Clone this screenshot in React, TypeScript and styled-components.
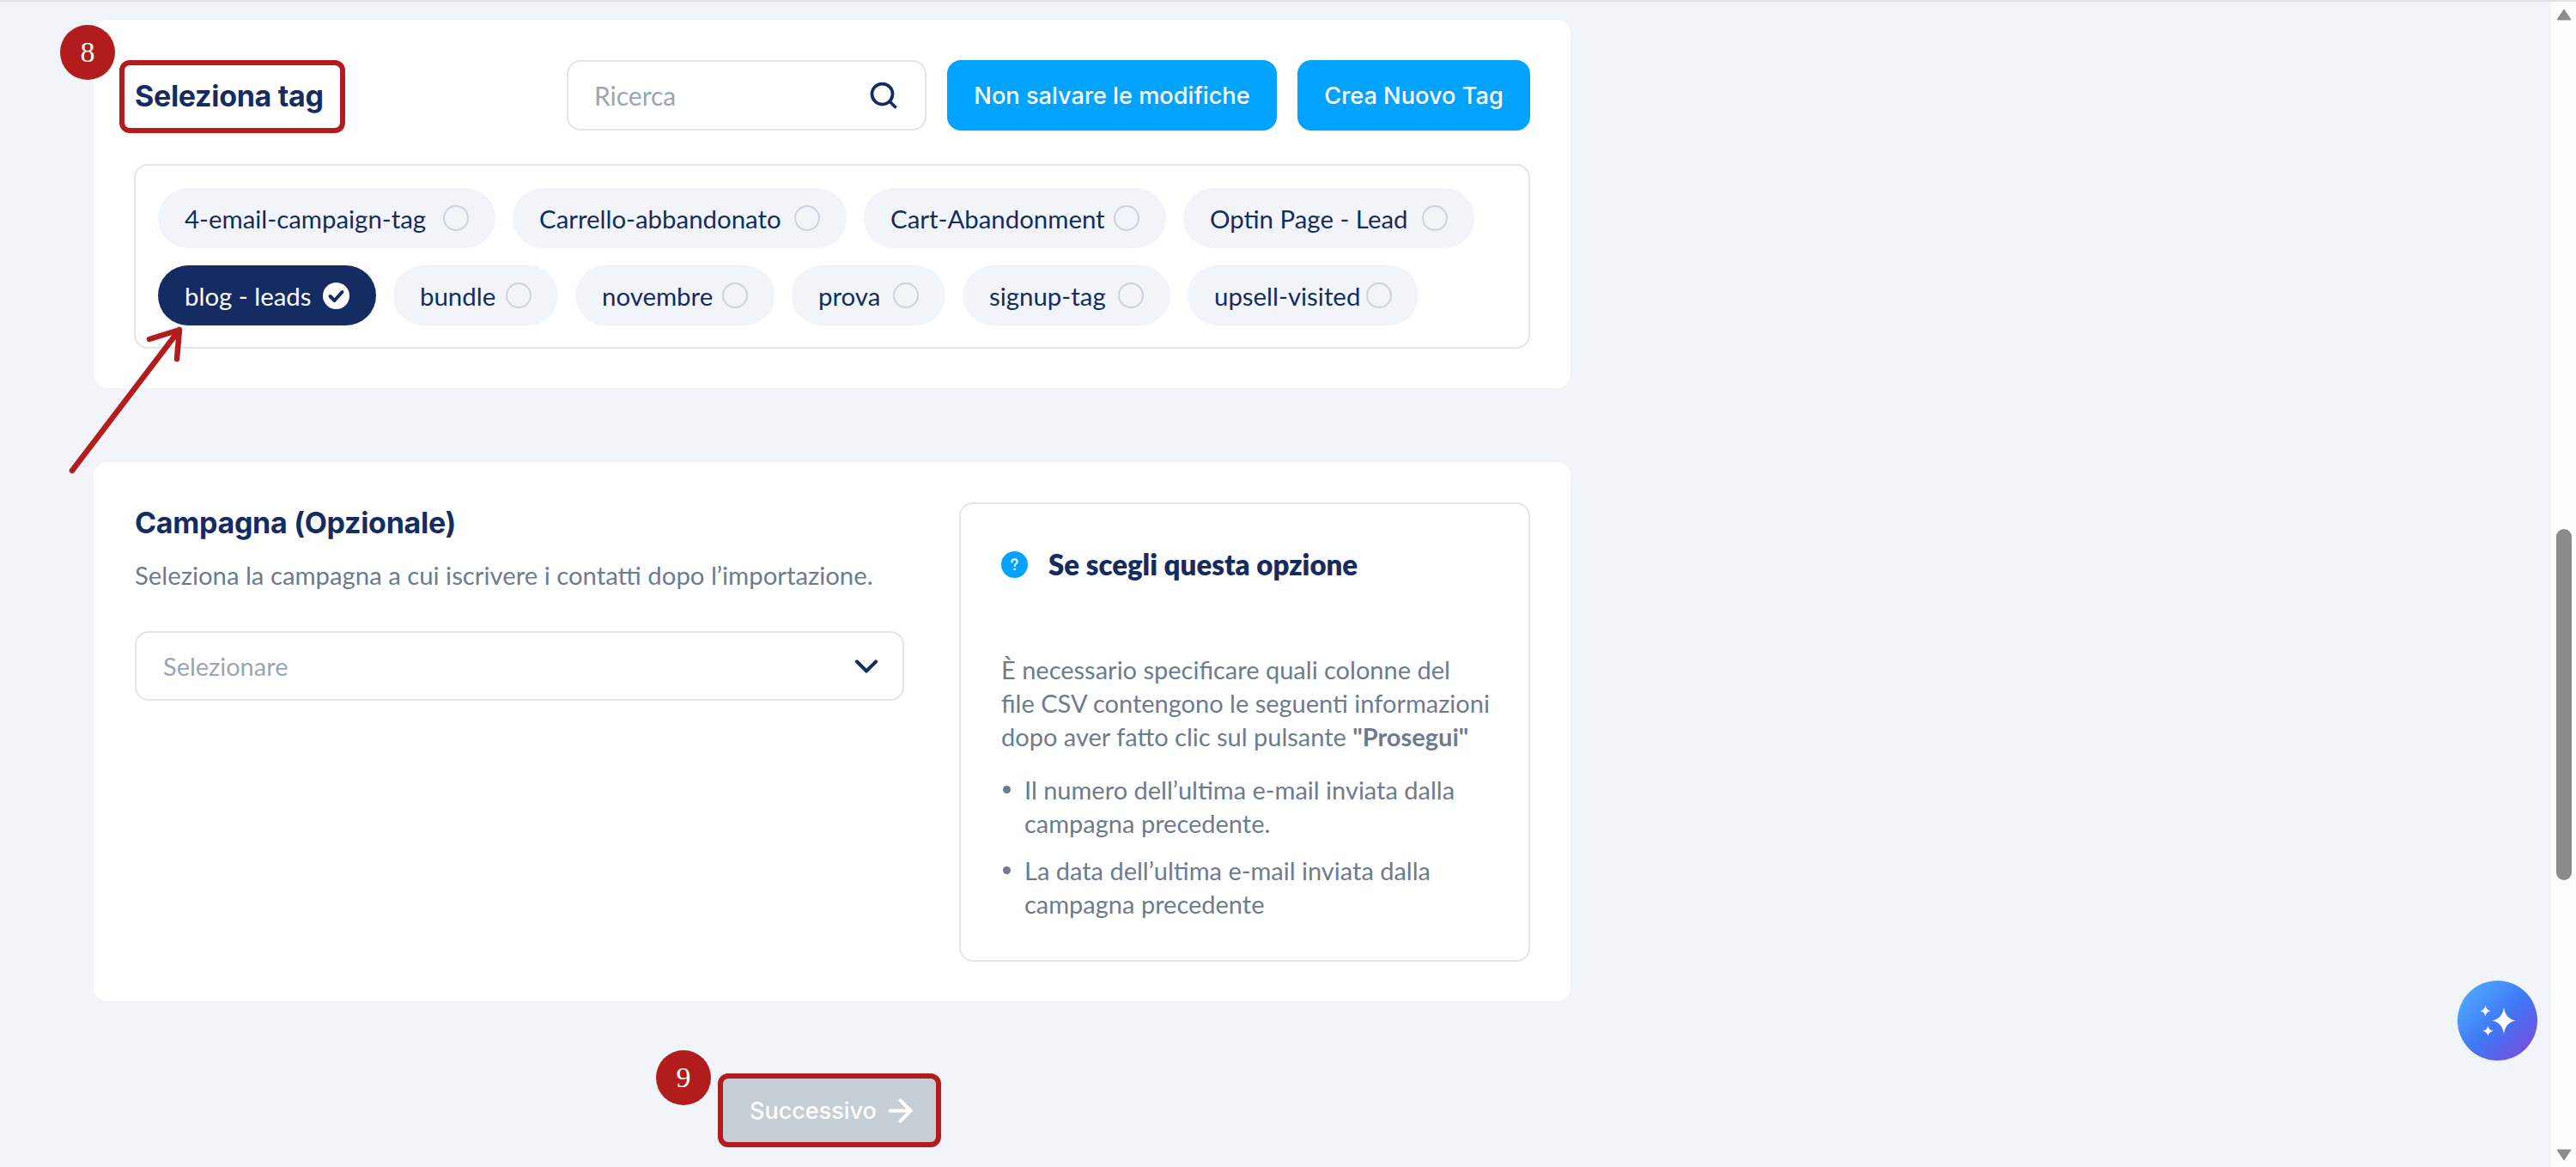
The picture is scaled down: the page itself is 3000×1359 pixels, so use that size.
import React, { FC } from 'react'
import styled, { createGlobalStyle } from 'styled-components'
import { Search, ChevronDown, ArrowRight } from 'lucide-react'

const GlobalStyle = createGlobalStyle`
  html, body {
    margin: 0;
    padding: 0;
    height: 100%;
    overflow: hidden;
    background: #f1f4f9;
  }
  * {
    box-sizing: border-box;
  }
`

const RED = '#b21c1c'
const NAVY = '#152c63'
const BORDER = '#e2e5ea'
const BODY_FONT = `'Lato', 'Noto Sans', sans-serif`
const HEAD_FONT = `'Inter', 'Liberation Sans', sans-serif`

const Page = styled.div`
  position: relative;
  display: flex;
  width: 3000px;
  height: 1359px;
  border-top: 2px solid #e3e4e6;
  background: #f1f4f9;
  overflow: hidden;
  font-family: ${BODY_FONT};
`
const Main = styled.main`
  position: relative;
  flex: 1;
  padding: 21px 0 0 109px;
`
const Card = styled.section`
  position: relative;
  width: 1720px;
  background: #fff;
  border-radius: 16px;
`
const TagCard = styled(Card)`
  height: 429px;
  padding: 47px 47px 0;
`
const CampaignCard = styled(Card)`
  display: flex;
  justify-content: space-between;
  height: 628px;
  margin-top: 86px;
  padding: 47px 47px 0 48px;
`
const TagHeader = styled.div`
  display: flex;
  align-items: center;
  height: 82px;
`
const TitleBox = styled.div`
  display: flex;
  align-items: center;
  width: 263px;
  height: 85px;
  margin: 3px 0 0 -17px;
  padding: 0 0 3px 12px;
  border: 6px solid ${RED};
  border-radius: 12px;
`
const Title = styled.h2`
  margin: 0;
  font-family: ${HEAD_FONT};
  font-size: 34px;
  line-height: 41px;
  font-weight: 700;
  letter-spacing: -0.3px;
  color: ${NAVY};
  white-space: nowrap;
`
const SearchBox = styled.div`
  display: flex;
  align-items: center;
  justify-content: space-between;
  width: 419px;
  height: 82px;
  margin-left: auto;
  padding: 0 30px 0 30px;
  border: 2px solid ${BORDER};
  border-radius: 16px;
  font-size: 30px;
  color: #9aa5b5;
`
const BlueButton = styled.button<{ $width: number }>`
  height: 82px;
  margin-left: 24px;
  padding: 0;
  width: ${(p) => p.$width}px;
  border: 0;
  border-radius: 16px;
  background: #00a3ff;
  color: #fff;
  font-family: ${HEAD_FONT};
  font-size: 27.2px;
  font-weight: 500;
`
const TagBox = styled.div`
  display: flex;
  flex-wrap: wrap;
  gap: 20px;
  align-content: flex-start;
  width: 1626px;
  height: 215px;
  margin-top: 39px;
  padding: 26px;
  border: 2px solid ${BORDER};
  border-radius: 16px;
`
const Chip = styled.div<{ $width: number; $active?: boolean }>`
  display: flex;
  align-items: center;
  justify-content: space-between;
  width: ${(p) => p.$width}px;
  height: 70px;
  padding: 0 31px;
  border-radius: 35px;
  background: ${(p) => (p.$active ? NAVY : '#f1f4f9')};
  color: ${(p) => (p.$active ? '#fff' : NAVY)};
  font-size: 29.4px;
  white-space: nowrap;
`
const Radio = styled.span`
  flex: none;
  width: 30px;
  height: 30px;
  border: 2.5px solid #cbd3e0;
  border-radius: 50%;
`
const Column = styled.div`
  width: 896px;
`
const CampaignTitle = styled(Title)`
  margin-top: 3px;
`
const Subtitle = styled.p`
  margin: 21px 0 0;
  font-size: 29.3px;
  line-height: 39px;
  color: #6d7b91;
  white-space: nowrap;
`
const SelectBox = styled.div`
  display: flex;
  align-items: center;
  justify-content: space-between;
  height: 81px;
  margin-top: 46px;
  padding: 0 20px 0 31px;
  border: 2px solid ${BORDER};
  border-radius: 16px;
  font-size: 29px;
  color: #9aa5b5;
`
const InfoBox = styled.aside`
  width: 665px;
  height: 535px;
  padding: 55px 48px 0 47px;
  border: 2px solid ${BORDER};
  border-radius: 16px;
  font-size: 29px;
  line-height: 39px;
  color: #6d7b91;
`
const InfoHeader = styled.div`
  display: flex;
  align-items: center;
  gap: 24px;
  height: 31px;
  margin-bottom: 87px;
`
const InfoTitle = styled.h3`
  margin: 0;
  font-size: 33px;
  font-weight: 800;
  color: ${NAVY};
`
const Paragraph = styled.p`
  margin: 0;
  white-space: nowrap;
`
const BulletList = styled.ul`
  margin: 23px 0 0;
  padding: 0 0 0 27px;
  list-style: none;
`
const Bullet = styled.li`
  position: relative;
  margin-bottom: 16px;
  white-space: nowrap;
  &::before {
    content: '';
    position: absolute;
    left: -25px;
    top: 15px;
    width: 9px;
    height: 9px;
    border-radius: 50%;
    background: #6d7b91;
  }
`
const Footer = styled.div`
  display: flex;
  margin: 84px 0 0 727px;
`
const NextButton = styled.div`
  display: flex;
  align-items: center;
  gap: 7px;
  width: 260px;
  height: 86px;
  padding-left: 31px;
  border: 6px solid ${RED};
  border-radius: 12px;
  background: #c5cdd5;
  color: #fff;
  font-family: ${HEAD_FONT};
  font-size: 27px;
  font-weight: 500;
`
const Badge = styled.div<{ $left: number; $top: number }>`
  position: absolute;
  left: ${(p) => p.$left}px;
  top: ${(p) => p.$top}px;
  display: flex;
  align-items: center;
  justify-content: center;
  width: 64px;
  height: 64px;
  border-radius: 50%;
  background: ${RED};
  color: #fff;
  font-family: 'Liberation Serif', serif;
  font-size: 34px;
`
const ArrowMark = styled.svg`
  position: absolute;
  left: 0;
  top: 0;
  pointer-events: none;
`
const Assistant = styled.div`
  position: absolute;
  left: 2862px;
  top: 1140px;
  display: flex;
  align-items: center;
  justify-content: center;
  width: 93px;
  height: 93px;
  border-radius: 50%;
  background: linear-gradient(135deg, #4fa8ff 10%, #3f78f6 52%, #7a4cdc 92%);
`
const Scrollbar = styled.div`
  display: flex;
  flex-direction: column;
  align-items: center;
  flex: none;
  width: 29px;
  height: 100%;
  background: #fdfdfd;
`
const ScrollArrow = styled.svg`
  flex: none;
  display: block;
  margin-top: 8px;
`
const ScrollTrack = styled.div`
  flex: 1;
  width: 100%;
  padding: 592px 5px 0 6px;
`
const ScrollThumb = styled.div`
  width: 100%;
  height: 409px;
  border-radius: 9px;
  background: #8b8b8b;
`
const ScrollArrowDown = styled(ScrollArrow)`
  margin: 0 0 7px;
`

type TagItem = { label: string; width: number; active?: boolean }

const tags: TagItem[] = [
  { label: '4-email-campaign-tag', width: 393 },
  { label: 'Carrello-abbandonato', width: 389 },
  { label: 'Cart-Abandonment', width: 352 },
  { label: 'Optin Page - Lead', width: 339 },
  { label: 'blog - leads', width: 254, active: true },
  { label: 'bundle', width: 192 },
  { label: 'novembre', width: 232 },
  { label: 'prova', width: 179 },
  { label: 'signup-tag', width: 242 },
  { label: 'upsell-visited', width: 269 },
]

const CheckedIcon: FC = () => (
  <svg width="31" height="31" viewBox="0 0 31 31">
    <circle cx="15.5" cy="15.5" r="15.5" fill="#fff" />
    <path d="M8.5 16l5 5 9-10" fill="none" stroke={NAVY} strokeWidth="4" strokeLinecap="round" strokeLinejoin="round" />
  </svg>
)

const HelpIcon: FC = () => (
  <svg width="31" height="31" viewBox="0 0 31 31">
    <circle cx="15.5" cy="15.5" r="15.5" fill="#00a3ff" />
    <path d="M12.5 12.5c0-2 1.3-3.2 3.2-3.2s3 1.2 3 2.8c0 2.500-3 2.500-3 5" fill="none" stroke="#fff" strokeWidth="2" strokeLinecap="round" />
    <circle cx="15.700" cy="21" r="1.300" fill="#fff" />
  </svg>
)

const SparkleIcon: FC = () => (
  <svg width="42" height="36" viewBox="0 0 42 36" fill="#fff">
    <path d="M28 2c1.500 9 5 13.500 13.500 15.500C33 19.500 29.500 24 28 33c-1.500-9-5-13.500-13.500-15.500C23 15.500 26.500 11 28 2z" />
    <path d="M6.500 0c.7 3.500 2.300 5.300 6 6.300-3.700 1-5.300 2.800-6 6.300-.7-3.500-2.300-5.300-6-6.300 3.700-1 5.300-2.800 6-6.300z" />
    <path d="M9.500 23.500c.7 3.300 2.300 5.100 6 6-3.700 1-5.300 2.700-6 6-.7-3.300-2.300-5-6-6 3.700-.9 5.300-2.700 6-6z" />
  </svg>
)

const App: FC = () => {
  return (
    <>
      <GlobalStyle />
      <Page>
        <Main>
          <TagCard>
            <TagHeader>
              <TitleBox>
                <Title>Seleziona tag</Title>
              </TitleBox>
              <SearchBox>
                Ricerca
                <Search size={36} color={NAVY} strokeWidth={2.5} />
              </SearchBox>
              <BlueButton $width={384}>Non salvare le modifiche</BlueButton>
              <BlueButton $width={271}>Crea Nuovo Tag</BlueButton>
            </TagHeader>
            <TagBox>
              {tags.map((tag) => (
                <Chip key={tag.label} $width={tag.width} $active={tag.active}>
                  {tag.label}
                  {tag.active ? <CheckedIcon /> : <Radio />}
                </Chip>
              ))}
            </TagBox>
          </TagCard>
          <CampaignCard>
            <Column>
              <CampaignTitle>Campagna (Opzionale)</CampaignTitle>
              <Subtitle>Seleziona la campagna a cui iscrivere i contatti dopo l’importazione.</Subtitle>
              <SelectBox>
                Selezionare
                <ChevronDown size={44} color={NAVY} strokeWidth={2.2} />
              </SelectBox>
            </Column>
            <InfoBox>
              <InfoHeader>
                <HelpIcon />
                <InfoTitle>Se scegli questa opzione</InfoTitle>
              </InfoHeader>
              <Paragraph>
                È necessario specificare quali colonne del
                <br />
                file CSV contengono le seguenti informazioni
                <br />
                dopo aver fatto clic sul pulsante <b>"Prosegui"</b>
              </Paragraph>
              <BulletList>
                <Bullet>
                  Il numero dell’ultima e-mail inviata dalla
                  <br />
                  campagna precedente.
                </Bullet>
                <Bullet>
                  La data dell’ultima e-mail inviata dalla
                  <br />
                  campagna precedente
                </Bullet>
              </BulletList>
            </InfoBox>
          </CampaignCard>
          <Footer>
            <NextButton>
              Successivo
              <ArrowRight size={41} strokeWidth={2.4} />
            </NextButton>
          </Footer>
          <Badge $left={70} $top={27}>8</Badge>
          <Badge $left={764} $top={1221}>9</Badge>
          <ArrowMark width="400" height="600">
            <path d="M84 546L209 382M174 393L209 382L206 416" fill="none" stroke={RED} strokeWidth="6.5" strokeLinecap="round" strokeLinejoin="round" />
          </ArrowMark>
        </Main>
        <Scrollbar>
          <ScrollArrow width="18" height="14" viewBox="0 0 18 14">
            <path d="M9 1L17 13H1z" fill="#8b8b8b" stroke="#8b8b8b" strokeLinejoin="round" />
          </ScrollArrow>
          <ScrollTrack>
            <ScrollThumb />
          </ScrollTrack>
          <ScrollArrowDown width="18" height="14" viewBox="0 0 18 14">
            <path d="M9 13L17 1H1z" fill="#8b8b8b" stroke="#8b8b8b" strokeLinejoin="round" />
          </ScrollArrowDown>
        </Scrollbar>
        <Assistant>
          <SparkleIcon />
        </Assistant>
      </Page>
    </>
  )
}

export default App
